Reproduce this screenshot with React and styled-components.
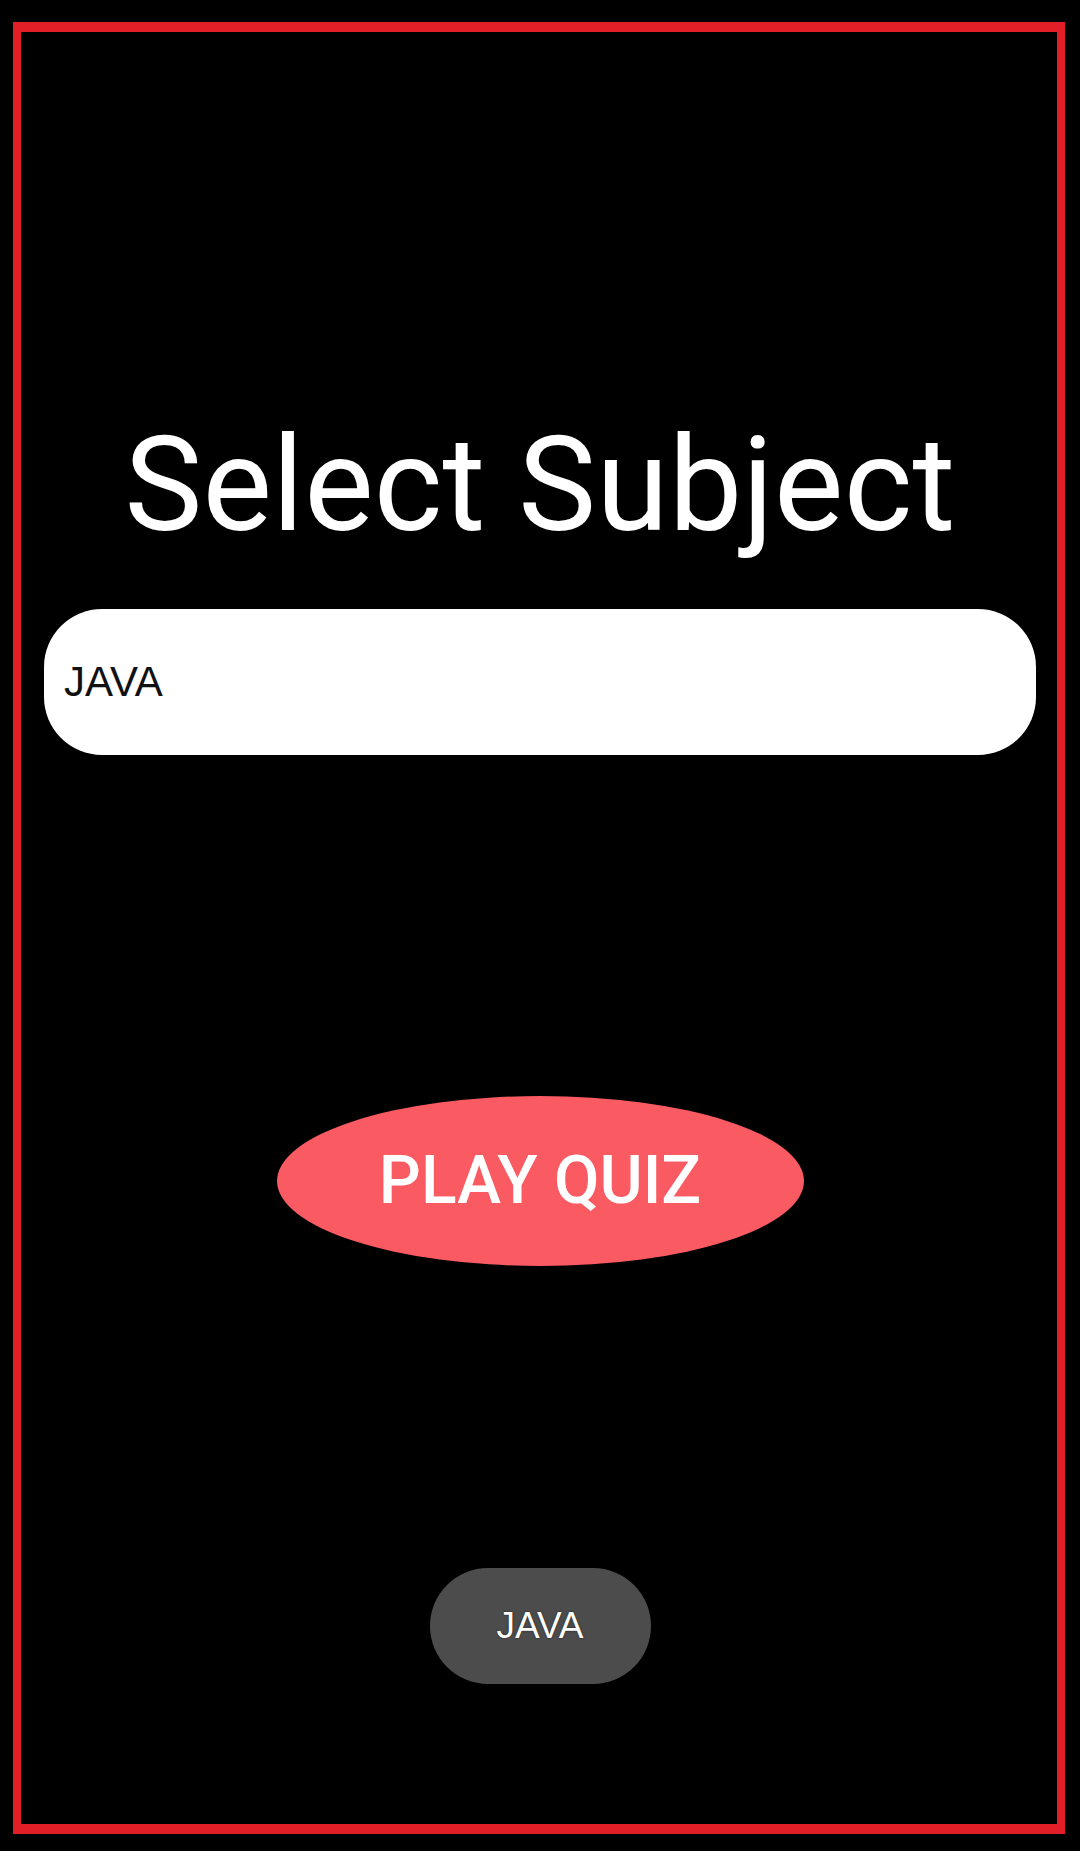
import React from "react";
import styled, { createGlobalStyle } from "styled-components";

const Global = createGlobalStyle`
  html, body {
    margin: 0;
    padding: 0;
    background: #000;
  }
  body {
    width: 1080px;
    height: 1851px;
    overflow: hidden;
  }
  * { box-sizing: border-box; }
`;

const Screen = styled.div`
  width: 1080px;
  height: 1851px;
  background: #000;
  padding: 22px 15px 17px 13px;
`;

const Frame = styled.div`
  height: 1812px;
  border-style: solid;
  border-color: #e21f26;
  border-width: 10px 8px 10px 8px;
  display: flex;
  flex-direction: column;
  align-items: center;
  padding: 388px 21px 0 23px;
`;

const Title = styled.h1`
  margin: 0;
  font-family: Roboto, "Liberation Sans", sans-serif;
  font-weight: 400;
  font-size: 131px;
  line-height: 1;
  color: #fff;
  letter-spacing: 0.2px;
`;

const SubjectField = styled.div`
  margin-top: 58px;
  align-self: stretch;
  height: 146px;
  background: #fff;
  border-radius: 58px;
  display: flex;
  align-items: center;
  padding-left: 20px;
  font-family: "Liberation Sans", Arial, sans-serif;
  font-size: 42px;
  color: #111;
`;

const PlayButton = styled.button`
  margin-top: 341px;
  width: 527px;
  height: 170px;
  border: none;
  border-radius: 50%;
  background: #fa5a61;
  color: #fff;
  font-family: Roboto, "Liberation Sans", sans-serif;
  font-weight: 500;
  font-size: 66px;
  line-height: 1;
  padding: 0;
  display: flex;
  align-items: center;
  justify-content: center;
`;

const Toast = styled.div`
  margin-top: 302px;
  width: 221px;
  height: 116px;
  border-radius: 58px;
  background: #4c4c4c;
  color: #fff;
  display: flex;
  align-items: center;
  justify-content: center;
  font-family: "Liberation Sans", Arial, sans-serif;
  font-size: 37px;
  text-shadow: 0 0 2px rgba(0, 0, 0, 0.7);
`;

export default function App() {
  return (
    <>
      <Global />
      <Screen>
        <Frame>
          <Title>Select Subject</Title>
          <SubjectField>JAVA</SubjectField>
          <PlayButton>PLAY QUIZ</PlayButton>
          <Toast>JAVA</Toast>
        </Frame>
      </Screen>
    </>
  );
}
